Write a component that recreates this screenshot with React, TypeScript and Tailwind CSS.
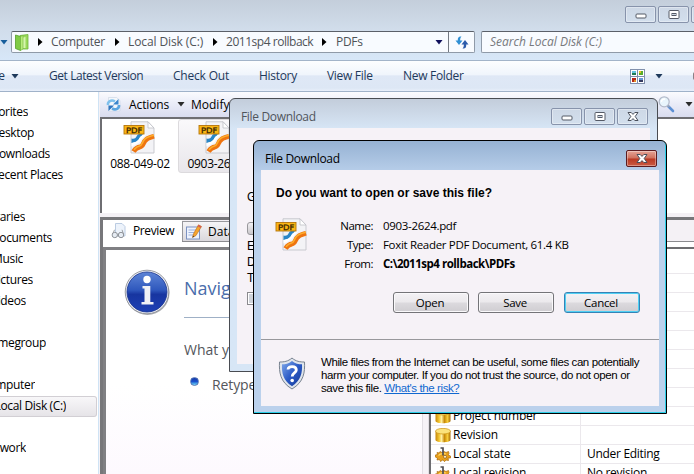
import React from "react";

const UI = "font-['Open_Sans','Noto_Sans',sans-serif]";

function Label({ className = "", children }: { className?: string; children: React.ReactNode }) {
  return <span className={`block shrink-0 whitespace-nowrap ${className}`}>{children}</span>;
}

function Caret({ className = "" }: { className?: string }) {
  return (
    <svg className={`block shrink-0 ${className}`} width="8" height="5" viewBox="0 0 8 5">
      <path d="M.5 0H7.500L4 4.500Z" fill="currentColor" />
    </svg>
  );
}

function Crumb({ className = "" }: { className?: string }) {
  return (
    <svg className={`block shrink-0 text-black ${className}`} width="5" height="8" viewBox="0 0 5 8">
      <path d="M0 0L4.5 4L0 8Z" fill="currentColor" />
    </svg>
  );
}

function MinGlyph() {
  return (
    <svg width="12" height="6" viewBox="0 0 12 6" className="mt-[3px] block">
      <rect x="1" y="1" width="10" height="4" rx="1" fill="#fff" stroke="#555a66" />
    </svg>
  );
}

function MaxGlyph() {
  return (
    <svg width="12" height="9" viewBox="0 0 12 9" className="block">
      <rect x="1" y="0.5" width="10" height="8" rx="1" fill="#fff" stroke="#555a66" />
      <rect x="4" y="3.5" width="4" height="2" fill="#ccd6e3" stroke="#555a66" />
    </svg>
  );
}

function CloseGlyph() {
  return (
    <svg width="12" height="9" viewBox="0 0 12 9" className="block">
      <path
        d="M1 .5H4.200L6 2.400L7.800 .5H11L8.200 4.500L11 8.500H7.800L6 6.600L4.200 8.500H1L3.800 4.500Z"
        fill="#fff"
        stroke="#4b505c"
        strokeWidth="1"
      />
    </svg>
  );
}

function CaptionButton({ children }: { children?: React.ReactNode }) {
  return (
    <div className="flex h-[17px] w-[31px] shrink-0 items-center justify-center rounded-[2px] border border-[#8793ab] bg-linear-to-b from-[#cdd8e6] to-[#d3dfed] shadow-[inset_0_0_0_1px_rgba(255,255,255,0.35)]">
      {children}
    </div>
  );
}

function PdfIcon() {
  return (
    <svg width="32" height="33" viewBox="0 0 32 33" className="block shrink-0">
      <path d="M8 .8H25L31 7V32H8Z" fill="#f3f3f6" stroke="#c4c5cb" strokeWidth=".9" />
      <path d="M25 .8V7H31Z" fill="#fff" stroke="#bfc0c6" strokeWidth=".8" />
      <path d="M8.500 17.500C11 18 12.500 17.500 13.500 15.500C14.300 14 15 13.300 16 13H20C19.500 15 17.500 15 16.500 17C15 20.500 12.500 21 8.500 22Z" fill="#2a86c6" />
      <path d="M8.500 22C12.500 21 15 20.500 16.500 17C17.500 15 19.500 15 20 13H23C22 16 19.500 16.500 18 19C16 22.500 12.500 23.500 8.500 25.500Z" fill="#fff" />
      <path d="M10.500 30.500C12.500 27.500 14 26.300 17 26C20 25.500 20 22.500 22 19.800C24 16.800 27 16.500 31 15.300" fill="none" stroke="#ee7410" strokeWidth="4.800" />
      <path d="M11 28.700C13 26.300 14.500 25.200 16.500 25C19 24.700 19 21.700 21.200 18.800C23.500 15.800 27 15.200 31 14.200" fill="none" stroke="#fdae2c" strokeWidth="1.600" />
      <rect x="1" y="4.500" width="20" height="8.500" fill="#fbb615" stroke="#b5750a" strokeWidth=".9" />
      <text
        x="3"
        y="11.500"
        fontSize="7.500"
        fontWeight="400"
        stroke="#3a2400"
        strokeWidth=".3"
        textLength="16.500"
        lengthAdjust="spacingAndGlyphs"
        fill="#3a2400"
        className="font-['DejaVu_Sans',sans-serif]"
      >
        PDF
      </text>
    </svg>
  );
}

function FolderIcon() {
  return (
    <svg width="14" height="17" viewBox="0 0 14 17" className="block shrink-0">
      <path d="M5 1.500L13 .5V15H5Z" fill="#9ad95b" stroke="#6eb53a" strokeWidth=".8" />
      <path d="M8 3.500L10.500 3V14H8Z" fill="#d6f5ad" />
      <path d="M.5 1L5.500 2.500V16.500L.5 14.500Z" fill="#7fcb45" stroke="#55a02b" strokeWidth=".8" />
      <path d="M5.500 2.500L8 1.500V15L5.500 16.500Z" fill="#b9ec7c" stroke="#6eb53a" strokeWidth=".6" />
    </svg>
  );
}

function GoIcon() {
  return (
    <svg width="14" height="13" viewBox="0 0 14 13" className="block shrink-0">
      <path d="M6.500 .5C3.800 0 2.800 1.500 2.800 3.500V4.500H.5L4 9L7.500 4.500H5.200C5 3 5.500 1.500 6.500 .5Z" fill="#2f8fd4" />
      <path d="M7.500 12.500C10.200 13 11.200 11.500 11.200 9.500V8.500H13.500L10 4L6.500 8.500H8.800C9 10 8.500 11.500 7.500 12.500Z" fill="#2b5bab" />
    </svg>
  );
}

function SyncIcon() {
  return (
    <svg width="15" height="15" viewBox="0 0 15 15" className="block shrink-0">
      <path d="M2.500 .5H10.500L14 3.500V14H2.500Z" fill="#f4f7fb" stroke="#c9d3e2" strokeWidth=".6" />
      <path d="M2 8C1.500 4.500 5 2.300 9 4.300" fill="none" stroke="#7fc0ec" strokeWidth="2.600" />
      <path d="M12.500 2V7.500H7Z" fill="#3a86cd" />
      <path d="M13 8C13.300 11.500 9.800 13.500 6 11.500" fill="none" stroke="#5ba5e0" strokeWidth="2.600" />
      <path d="M2.500 14V8.500H8Z" fill="#2f76c0" />
    </svg>
  );
}

function ViewsIcon() {
  return (
    <svg width="15" height="15" viewBox="0 0 15 15" className="block shrink-0">
      <rect x=".5" y=".5" width="14" height="14" fill="#fff" stroke="#8190ac" />
      <path d="M7.500 0V15M0 7.500H15" stroke="#8190ac" />
      <rect x="2" y="2" width="4" height="4" fill="#67c4df" />
      <rect x="2" y="4" width="4" height="2" fill="#207b54" />
      <rect x="9" y="2" width="4" height="4" fill="#58ac2a" />
      <rect x="9" y="2" width="2" height="2" fill="#e5bf27" />
      <rect x="2" y="9" width="4" height="4" fill="#b32718" />
      <rect x="4" y="11" width="2" height="2" fill="#e38c25" />
      <rect x="9" y="9" width="4" height="4" fill="#6797d6" />
      <rect x="9" y="11" width="4" height="2" fill="#363b61" />
    </svg>
  );
}

function SearchIcon() {
  return (
    <svg width="17" height="17" viewBox="0 0 17 17" className="block shrink-0">
      <path d="M10.500 10.500L15 15" stroke="#5d90d4" strokeWidth="2.600" strokeLinecap="round" />
      <path d="M9.800 9.500L11.500 11.200" stroke="#9ba4b2" strokeWidth="1.600" />
      <circle cx="6.200" cy="5.800" r="5" fill="#e9f5fc" stroke="#b3bac9" strokeWidth="1.200" />
      <path d="M3.500 6C3.500 4 5 3 7 3" fill="none" stroke="#fff" strokeWidth="1.300" />
    </svg>
  );
}

function PreviewIcon() {
  return (
    <svg width="15" height="16" viewBox="0 0 15 16" className="block shrink-0">
      <path d="M4.500 .5H11L14 3.500V13H4.500Z" fill="#edf3fb" stroke="#b4c6df" strokeWidth=".9" />
      <path d="M1.800 11L3.500 6.800M12.500 11L11 6.800" stroke="#909499" strokeWidth=".9" />
      <circle cx="3.800" cy="12" r="2.700" fill="#e6ecf3" stroke="#86898f" strokeWidth=".9" />
      <circle cx="10" cy="12" r="2.700" fill="#e6ecf3" stroke="#86898f" strokeWidth=".9" />
    </svg>
  );
}

function DataIcon() {
  return (
    <svg width="16" height="16" viewBox="0 0 16 16" className="block shrink-0">
      <rect x=".5" y="3" width="13" height="12" fill="#eef3fd" stroke="#7c92c2" />
      <path d="M2.500 6H11M2.500 8.500H11M2.500 11H9" stroke="#9db1dc" />
      <path d="M6.500 13.500L7.500 9.800L12.500 .8L15.500 2.500L10 11.500Z" fill="#f5a52f" stroke="#bc6916" strokeWidth=".6" />
      <path d="M12.500 .8L15.500 2.500L14.600 4L11.700 2.300Z" fill="#d65a52" />
      <path d="M6.500 13.500L7 11.700L8.300 12.500Z" fill="#333" />
    </svg>
  );
}

function InfoIcon() {
  return (
    <svg width="48" height="48" viewBox="0 0 48 48" className="block shrink-0">
      <defs>
        <linearGradient id="infoBlue" x1="0" y1="0" x2="0" y2="1">
          <stop offset="0" stopColor="#5d84d6" />
          <stop offset=".45" stopColor="#2f58bd" />
          <stop offset=".56" stopColor="#1735a0" />
          <stop offset="1" stopColor="#1d40b5" />
        </linearGradient>
      </defs>
      <circle cx="24.500" cy="25" r="22" fill="#8a8d94" opacity=".7" />
      <circle cx="24" cy="24" r="21.800" fill="#e9ebf0" stroke="#85888f" strokeWidth=".8" />
      <circle cx="24" cy="24" r="20" fill="url(#infoBlue)" stroke="#183392" strokeWidth=".8" />
      <circle cx="24" cy="11.500" r="3.700" fill="#fff" />
      <path d="M19.500 18H27.300V34H30.500V36.500H18.500V34H21.500V20.500H19.500Z" fill="#f0f1f6" />
    </svg>
  );
}

function ShieldIcon() {
  return (
    <svg width="28" height="33" viewBox="0 0 28 33" className="block shrink-0">
      <defs>
        <linearGradient id="shieldBlue" x1="0" y1="0" x2="1" y2="1">
          <stop offset="0" stopColor="#80aaeb" />
          <stop offset=".5" stopColor="#2b5bc6" />
          <stop offset="1" stopColor="#153896" />
        </linearGradient>
      </defs>
      <path d="M14 1C10 4.500 6 5 1.500 5C1 15 2 25 14 32C26 25 27 15 26.500 5C22 5 18 4.500 14 1Z" fill="#dfe5ec" stroke="#78828f" />
      <path d="M14 4C10.500 6.700 7.500 7.300 4 7.300C3.600 16 5 23.500 14 29.200C23 23.500 24.400 16 24 7.300C20.500 7.300 17.500 6.700 14 4Z" fill="url(#shieldBlue)" />
      <path d="M10 12.500C10 8.500 18.300 8.500 18.300 13C18.300 16 14.200 16 14.200 19.500" fill="none" stroke="#fff" strokeWidth="2.800" />
      <circle cx="14.200" cy="23.500" r="1.800" fill="#fff" />
    </svg>
  );
}

function CylinderIcon() {
  return (
    <svg width="16" height="15" viewBox="0 0 16 15" className="block shrink-0">
      <defs>
        <linearGradient id="gold">
          <stop offset="0" stopColor="#c78808" />
          <stop offset=".25" stopColor="#f5c934" />
          <stop offset=".4" stopColor="#fff0a0" />
          <stop offset=".6" stopColor="#c98b09" />
          <stop offset=".8" stopColor="#f6cc3a" />
          <stop offset="1" stopColor="#a66c04" />
        </linearGradient>
      </defs>
      <path d="M.5 3V12C.5 15 15.500 15 15.500 12V3Z" fill="url(#gold)" />
      <ellipse cx="8" cy="3.200" rx="7.500" ry="2.800" fill="#fbe37c" stroke="#d09c20" strokeWidth=".8" />
    </svg>
  );
}

function GearIcon() {
  return (
    <svg width="16" height="15" viewBox="0 0 16 15" className="block shrink-0">
      <path
        d="M5 4.500L7 5.500L9 4.500L11 5.500L13.500 4.500L14 6.500L13 8L15.500 9V11L13 11L13.500 13.500L11 13L9.500 14.700L8 12.800L5.500 14.500L4.500 12.500L2 13L2.500 11L.3 10V8L2.500 7.500L2 5.500L4 6Z"
        fill="#e9a01a"
        stroke="#a9680a"
        strokeWidth=".7"
      />
      <path d="M3.500 8.500C5 6.500 8 6.300 11 7" fill="none" stroke="#ffdc6b" strokeWidth="1.200" />
      <circle cx="10" cy="9.800" r="1.500" fill="#fff3cf" stroke="#8a540b" strokeWidth=".7" />
      <path d="M5.500 1H8V8.500" fill="none" stroke="#4e4e52" strokeWidth="1.700" />
    </svg>
  );
}

const places: { text: string; end: string; active?: boolean }[] = [
  { text: "Favorites", end: "w-[28px]" },
  { text: "Desktop", end: "w-[34px]" },
  { text: "Downloads", end: "w-[50px]" },
  { text: "Recent Places", end: "w-[63px]" },
  { text: "", end: "w-0" },
  { text: "Libraries", end: "w-[25px]" },
  { text: "Documents", end: "w-[52px]" },
  { text: "Music", end: "w-[23px]" },
  { text: "Pictures", end: "w-[33px]" },
  { text: "Videos", end: "w-[26px]" },
  { text: "", end: "w-0" },
  { text: "Homegroup", end: "w-[46px]" },
  { text: "", end: "w-0" },
  { text: "Computer", end: "w-[35px]" },
  { text: "Local Disk (C:)", end: "w-[66px]", active: true },
  { text: "", end: "w-0" },
  { text: "Network", end: "w-[26px]" },
];

function Sidebar() {
  return (
    <div className="w-[99px] shrink-0 overflow-hidden border-r border-[#cfe3f5] bg-white pt-[10px]">
      {places.map((p, i) => (
        <div
          key={i}
          className={`flex h-[21px] w-[97px] items-center ${
            p.active ? "rounded-r-[3px] border border-l-0 border-[#d2cfd4] bg-linear-to-b from-[#f8f7f9] to-[#e6e4e8]" : ""
          }`}
        >
          <div className={`flex h-[19px] items-center justify-end overflow-hidden pb-px ${p.end}`}>
            <Label className="text-[12px] tracking-[-0.35px] text-black">{p.text}</Label>
          </div>
        </div>
      ))}
    </div>
  );
}

const properties = [
  { name: "", value: "" },
  { name: "", value: "" },
  { name: "", value: "" },
  { name: "", value: "" },
  { name: "", value: "" },
  { name: "", value: "" },
  { name: "", value: "" },
  { name: "Project number", value: "", icon: "cylinder" },
  { name: "Revision", value: "", icon: "cylinder" },
  { name: "Local state", value: "Under Editing", icon: "gear" },
  { name: "Local revision", value: "No revision", icon: "gear" },
];

function Properties() {
  return (
    <div className="flex-1 overflow-hidden border-t-2 border-l-2 border-[#6d6d70] bg-white pt-[24px]">
      {properties.map((p, i) => (
        <div key={i} className="flex h-[19px] items-center border-t border-[#ebe8ec]">
          <div className="flex h-full w-[150px] shrink-0 items-center gap-[2px] border-r border-[#ebe8ec] pl-[4px]">
            {p.icon === "cylinder" && <CylinderIcon />}
            {p.icon === "gear" && <GearIcon />}
            <Label className="text-[12px] tracking-[-0.2px]">{p.name}</Label>
          </div>
          <Label className="pl-[6px] text-[12px] tracking-[-0.3px]">{p.value}</Label>
        </div>
      ))}
    </div>
  );
}

function Explorer() {
  return (
    <div className="flex h-[474px] w-[694px] flex-col overflow-hidden bg-[#d6e5f5]">
      <div className="flex h-[60px] shrink-0 flex-col bg-linear-to-b from-[#c4cedb] via-[#d1ddeb] to-[#d7e7f8]">
        <div className="flex h-[31px] gap-[2px] pt-[6px] pl-[625px]">
          <CaptionButton>
            <MinGlyph />
          </CaptionButton>
          <CaptionButton>
            <MaxGlyph />
          </CaptionButton>
          <CaptionButton />
        </div>
        <div className="flex h-[22px]">
          <div className="flex w-[11px] shrink-0 items-center">
            <Caret className="text-[#175e9c]" />
          </div>
          <div className="flex w-[464px] shrink-0 items-center rounded-[2px] border border-[#8f9aa8] border-t-[#5b6069] bg-[#f8fbff] text-[12px] text-[#4f5358]">
            <div className="w-[26px] shrink-0 pl-[3px]">
              <FolderIcon />
            </div>
            <Crumb />
            <Label className="ml-[8px] w-[64px] tracking-[-0.35px]">Computer</Label>
            <Crumb />
            <Label className="ml-[8px] w-[85px] tracking-[-0.1px]">Local Disk (C:)</Label>
            <Crumb />
            <Label className="ml-[8px] w-[96px] tracking-[-0.47px]">2011sp4 rollback</Label>
            <Crumb />
            <Label className="ml-[9px] w-[99px] tracking-[-0.3px]">PDFs</Label>
            <Caret className="text-[#10105c]" />
            <div className="ml-[5px] flex h-full flex-1 items-center justify-center border-l border-[#737983]">
              <GoIcon />
            </div>
          </div>
          <div className="ml-[6px] flex flex-1 items-center rounded-l-[2px] border border-r-0 border-[#8f9aa8] border-t-[#5b6069] bg-[#f8fbff] pl-[8px]">
            <Label className="text-[12px] text-[#77797d] italic">Search Local Disk (C:)</Label>
          </div>
        </div>
      </div>
      <div className="flex h-[32px] shrink-0 items-center border-y border-t-[#a3b4c9] border-b-[#a0b2c9] bg-[linear-gradient(to_bottom,#fdfeff_0%,#f0f5fc_45%,#dfe8f6_50%,#dde7f5_90%,#e8effa_100%)] text-[12px] text-[#1e395b]">
        <div className="flex w-[5px] shrink-0 justify-end overflow-hidden">
          <Label>e</Label>
        </div>
        <Caret className="ml-[6px]" />
        <Label className="ml-[30px] w-[124px] tracking-[-0.43px]">Get Latest Version</Label>
        <Label className="w-[86px] tracking-[-0.2px]">Check Out</Label>
        <Label className="w-[68px] tracking-[-0.3px]">History</Label>
        <Label className="w-[76px] tracking-[-0.3px]">View File</Label>
        <Label className="w-[227px] tracking-[-0.3px]">New Folder</Label>
        <ViewsIcon />
        <Caret className="ml-[10px]" />
        <div className="ml-[30px] h-[8px] w-[2px] shrink-0 rounded-l-sm bg-[#8b8085]" />
      </div>
      <div className="flex min-h-0 flex-1">
        <Sidebar />
        <div className="flex min-w-0 flex-1 flex-col bg-[#f4f1f5] pl-px">
          <div className="flex h-[25px] shrink-0 items-center bg-linear-to-b from-[#fbfbfe] via-[#e9ebf7] to-[#d9dcef] pl-[6px] text-[12px]">
            <SyncIcon />
            <Label className="ml-[8px] w-[48px] tracking-[-0.1px]">Actions</Label>
            <Caret className="text-[#2b2b2b]" />
            <Label className="ml-[6px] w-[467px]">Modify</Label>
            <SearchIcon />
            <Caret className="ml-[10px] text-[#2b2b2b]" />
          </div>
          <div className="flex h-[96px] shrink-0 border-t-2 border-l-2 border-[#6e6e72] bg-white">
            <div className="flex w-[76px] flex-col items-center">
              <div className="mt-[2px] -ml-[2px]">
                <PdfIcon />
              </div>
              <Label className="mt-px text-[12px] tracking-[-0.3px]">088-049-02</Label>
            </div>
            <div className="flex h-[54px] w-[76px] flex-col items-center rounded-[3px] border border-[#dcdadd] bg-linear-to-b from-[#faf9fb] to-[#e9e7eb]">
              <div className="mt-px -ml-[4px]">
                <PdfIcon />
              </div>
              <Label className="mt-px w-[57px] text-[12px] tracking-[-0.3px]">0903-2624</Label>
            </div>
          </div>
          <div className="mt-[4px] flex min-h-0 flex-1 flex-col border-t-[3px] border-l-[3px] border-[#77777a]">
            <div className="flex h-[27px] shrink-0 items-start bg-[#f4f1f5]">
              <div className="flex h-full w-[79px] shrink-0 items-center bg-white pb-[6px] pl-[8px] text-[12px]">
                <PreviewIcon />
                <Label className="ml-[7px] tracking-[-0.4px]">Preview</Label>
              </div>
              <div className="flex h-full flex-1 flex-col bg-white">
                <div className="flex h-[22px] border-b border-[#8b8b8f] bg-[#f4f1f5]">
                  <div className="mt-px flex w-[80px] items-center border border-b-0 border-[#98989c] bg-linear-to-b from-[#f5f4f6] to-[#dad8dc] pl-[3px] text-[12px]">
                    <DataIcon />
                    <Label className="ml-[6px]">Data</Label>
                  </div>
                </div>
              </div>
            </div>
            <div className="flex min-h-0 flex-1 bg-[#f6f3f7]">
              <div className="flex w-[319px] shrink-0 border-t-[3px] border-l-[3px] border-[#808083] bg-linear-to-b from-white from-60% to-[#fdf9fe]">
                <div className="mt-[18px] ml-[17px] w-[61px] shrink-0">
                  <InfoIcon />
                </div>
                <div className="w-[230px] pt-[23px]">
                  <Label className="flex h-[30px] items-center text-[18px] text-[#4a6dab]">Navig</Label>
                  <div className="mt-[14px] h-px bg-[#9fb0c6]" />
                  <Label className="mt-[20px] flex h-[22px] items-center text-[14px] text-[#54565b]">What y</Label>
                  <div className="mt-[13px] flex h-[22px] items-center pl-[6px]">
                    <div className="mb-[6px] h-[9px] w-[9px] shrink-0 rounded-full border border-[#5575b5] bg-linear-to-b from-[#143aa9] via-[#1b50cd] to-[#78d9f6]" />
                    <Label className="ml-[13px] text-[14px] tracking-[-0.1px] text-[#54565b]">Retype</Label>
                  </div>
                </div>
              </div>
              <div className="w-[7px] shrink-0 border-x border-[#e2dfe4]" />
              <Properties />
            </div>
          </div>
        </div>
      </div>
    </div>
  );
}

function ProgressDialog() {
  return (
    <div className="absolute top-[98px] left-[229px] flex h-[274px] w-[429px] flex-col rounded-t-[6px] border border-[#494c52] bg-[#d7e6f6] bg-linear-to-b from-[#c3cddb] to-[#d7e6f6] to-[30px] px-[7px] pb-[7px]">
      <div className="flex h-[29px] shrink-0 justify-between">
        <Label className="mt-[9px] ml-[4px] text-[12px] leading-[17px] tracking-[-0.33px] text-[#50555c]">
          File Download
        </Label>
        <div className="mt-[9px] mr-[2px] flex gap-[2px]">
          <CaptionButton>
            <MinGlyph />
          </CaptionButton>
          <CaptionButton>
            <MaxGlyph />
          </CaptionButton>
          <CaptionButton>
            <CloseGlyph />
          </CaptionButton>
        </div>
      </div>
      <div className="flex-1 bg-[#f6f2f7] pt-[61px] pl-[10px] font-['Liberation_Sans',sans-serif] text-[12px] leading-[16px]">
        <Label>G</Label>
        <div className="mt-[17px] h-[13px] w-[60px] rounded-[3px] border border-[#98989c] bg-linear-to-b from-[#f2f0f3] to-[#c9c7cb]" />
        <Label className="mt-[3px]">E</Label>
        <Label>D</Label>
        <Label>T</Label>
        <div className="mt-[6px] h-[13px] w-[13px] border border-[#8a8a8e] bg-[#cfd3da] shadow-[inset_0_0_0_1px_#fff]" />
      </div>
    </div>
  );
}

const details = [
  { label: "Name:", value: "0903-2624.pdf" },
  { label: "Type:", value: "Foxit Reader PDF Document, 61.4 KB" },
];

function PushButton({ focused, children }: { focused?: boolean; children: React.ReactNode }) {
  return (
    <div
      className={`flex h-[21px] w-[76px] items-center justify-center rounded-[3px] border bg-[linear-gradient(to_bottom,#f4f2f5_0%,#ebe9ec_48%,#dcdade_52%,#cfcdd1_100%)] pr-[2px] text-[11.5px] tracking-[-0.3px] text-black ${
        focused ? "border-[#3583b5] shadow-[inset_0_0_0_1px_#4fd0f4]" : "border-[#747478] shadow-[inset_0_0_0_1px_#faf9fb]"
      }`}
    >
      {children}
    </div>
  );
}

function DownloadDialog() {
  return (
    <div className="absolute top-[140px] left-[253px] flex h-[274px] w-[414px] flex-col rounded-t-[6px] border border-black bg-linear-to-b from-[#96b2d3] to-[#bbd1ec] to-[34px] px-[7px] pb-[7px] shadow-[inset_-1px_-1px_0_#2bcfe8]">
      <div className="flex h-[29px] shrink-0 justify-between">
        <Label className="mt-[9px] ml-[4px] text-[12px] leading-[17px] tracking-[-0.33px] text-black">File Download</Label>
        <div className="mt-[9px] mr-[2px] flex h-[17px] w-[31px] items-center justify-center rounded-[2px] border border-[#5c1c20] bg-[linear-gradient(to_bottom,#e5a496_0%,#d0705c_48%,#b93822_52%,#cb5b43_100%)] shadow-[inset_0_0_0_1px_rgba(255,255,255,0.35)]">
          <CloseGlyph />
        </div>
      </div>
      <div className="flex flex-1 flex-col bg-[#f6f2f7]">
        <Label className="mt-[15px] ml-[15px] font-['Liberation_Sans',sans-serif] text-[12px] leading-[16px] font-bold">
          Do you want to open or save this file?
        </Label>
        <div className="mt-[15px] flex h-[60px]">
          <div className="mt-[2px] ml-[14px] w-[32px] shrink-0">
            <PdfIcon />
          </div>
          <div className="ml-[26px] text-[11.5px] leading-[19px]">
            {details.map((d) => (
              <div key={d.label} className="flex">
                <Label className="w-[40px] text-right tracking-[-0.5px]">{d.label}</Label>
                <Label className="ml-[10px] tracking-[-0.32px]">{d.value}</Label>
              </div>
            ))}
            <div className="flex">
              <Label className="w-[40px] text-right tracking-[-0.5px]">From:</Label>
              <Label className="ml-[10px] font-bold tracking-[-0.48px]">C:\2011sp4 rollback\PDFs</Label>
            </div>
          </div>
        </div>
        <div className="mt-[16px] flex pl-[132px]">
          <PushButton>Open</PushButton>
          <div className="ml-[9px]">
            <PushButton>Save</PushButton>
          </div>
          <div className="ml-[10px]">
            <PushButton focused>Cancel</PushButton>
          </div>
        </div>
        <div className="mt-[26px] h-px shrink-0 bg-[#98989c]" />
        <div className="flex">
          <div className="mt-[17px] ml-[17px]">
            <ShieldIcon />
          </div>
          <div className="mt-[16px] ml-[15px] font-['Liberation_Sans',sans-serif] text-[11.5px] leading-[13px] tracking-[-0.4px]">
            <Label>While files from the Internet can be useful, some files can potentially</Label>
            <Label>harm your computer. If you do not trust the source, do not open or</Label>
            <Label>
              save this file. <span className="text-[#1068d0] underline">What's the risk?</span>
            </Label>
          </div>
        </div>
      </div>
    </div>
  );
}

export default function App() {
  return (
    <div className={`relative h-[474px] w-[694px] overflow-hidden text-black ${UI}`}>
      <Explorer />
      <ProgressDialog />
      <DownloadDialog />
    </div>
  );
}
